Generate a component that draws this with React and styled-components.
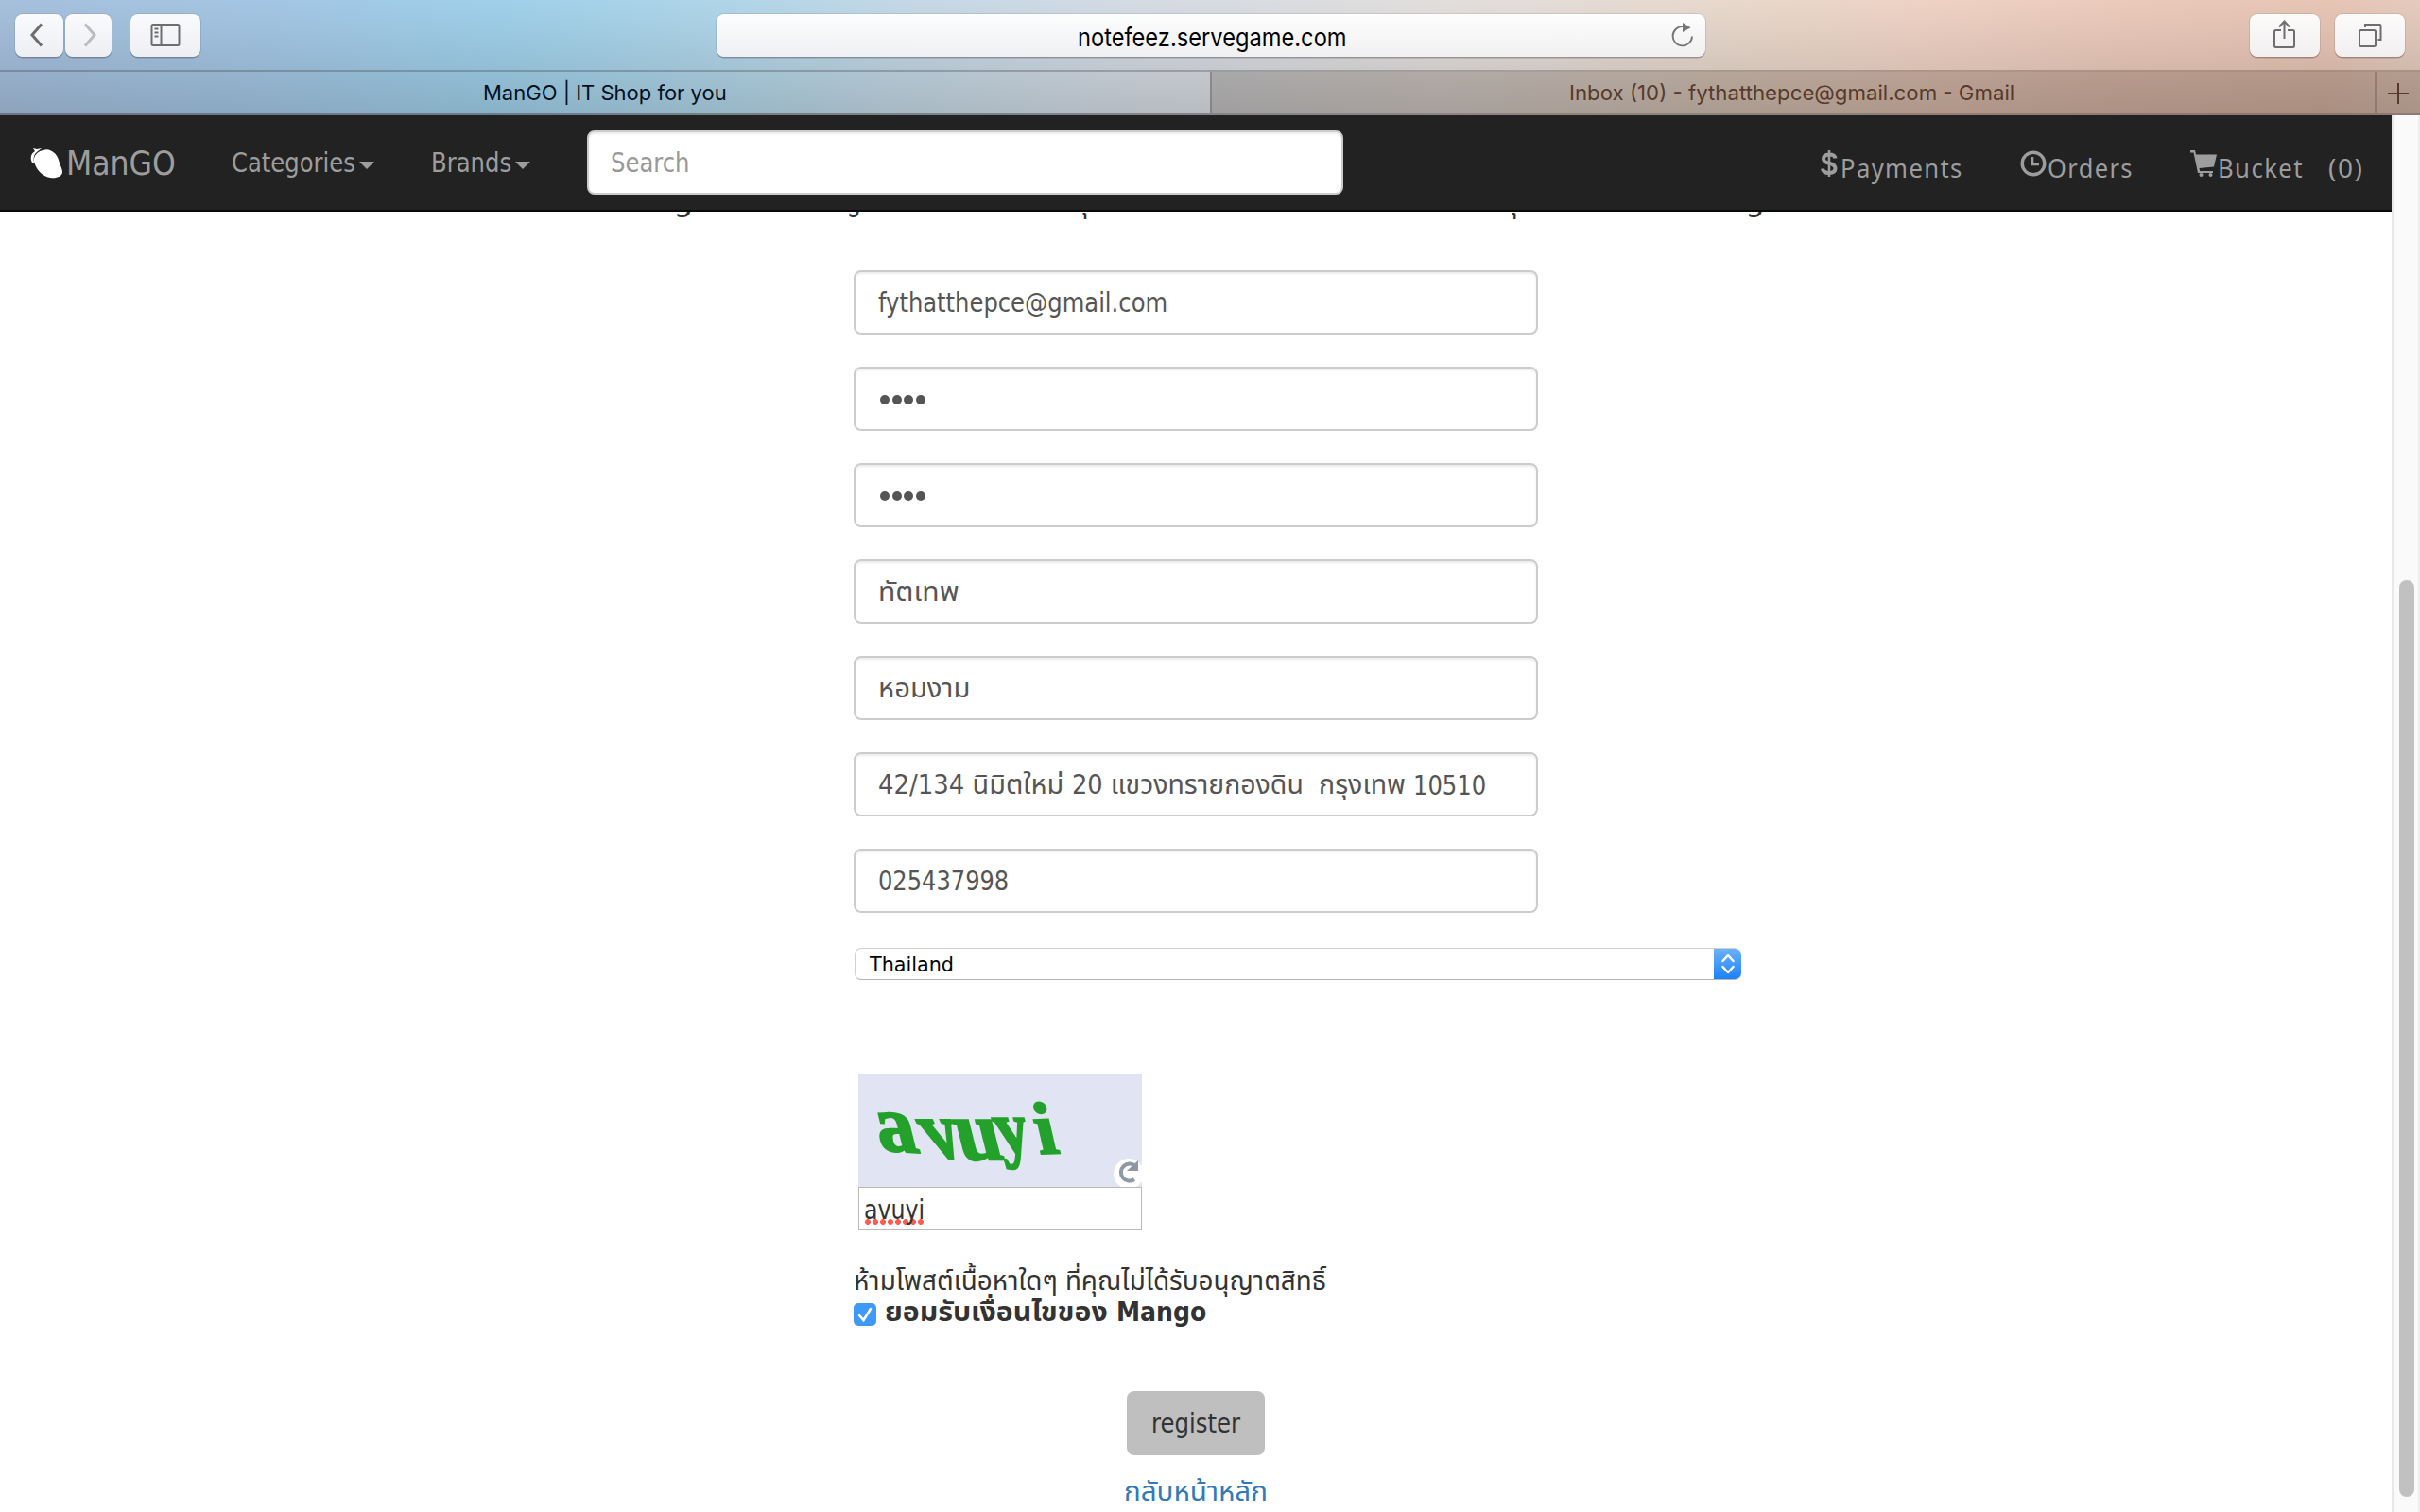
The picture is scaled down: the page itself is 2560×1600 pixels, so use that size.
import React, { useLayoutEffect, useRef, useState } from "react";
import styled, { createGlobalStyle } from "styled-components";

const GlobalStyle = createGlobalStyle`
  * { box-sizing: border-box; }
  html, body { margin: 0; padding: 0; background: #fff; overflow: hidden; }
  body { font-family: "DejaVu Sans Condensed", "DejaVu Sans", "Noto Sans Thai", "Loma", sans-serif; font-size: 28px; color: #333; }
`;

/* Sets one line of text to a fixed measure, whatever face the system supplies. */
const FitBox = styled.span`
  display: inline-block;
  flex: none;
  width: ${(p) => p.$width}px;
  white-space: pre;
  text-align: left;
`;
const FitInner = styled.span`
  display: inline-block;
  transform-origin: 0 50%;
`;
function Fit({ width, children }) {
  const ref = useRef(null);
  const [scale, setScale] = useState(1);
  useLayoutEffect(() => {
    const w = ref.current.offsetWidth;
    if (w) setScale(width / w);
  }, [width, children]);
  return (
    <FitBox $width={width}>
      <FitInner ref={ref} style={{ transform: `scaleX(${scale})` }}>{children}</FitInner>
    </FitBox>
  );
}

const Window = styled.div`
  width: 2560px;
  height: 1600px;
  display: flex;
  flex-direction: column;
  overflow: hidden;
  background: #fff;
`;

/* ---------- browser chrome ---------- */
const Chrome = styled.header`
  flex: none;
  height: 122px;
  display: flex;
  flex-direction: column;
  font-family: Inter, "Liberation Sans", sans-serif;
  background:
    linear-gradient(180deg, rgba(0,0,0,0) 0%, rgba(0,0,0,0.03) 25%, rgba(0,0,0,0.15) 100%),
    linear-gradient(97deg, #a6bfdc 0px, #a3c6e4 290px, #9fd0ea 530px, #b0d5e8 760px, #c4d8e5 960px, #d3dbe4 1180px, #e2dedc 1520px, #e8d8cc 1820px, #eed2c4 2020px, #eac9ba 2250px, #e6c5b5 2450px, #e4cfc2 2600px);
`;
const Toolbar = styled.div`
  height: 74px;
  display: grid;
  grid-template-columns: 742px 1046px 1fr;
  align-items: center;
  padding: 0 16px;
`;
const Tools = styled.div`
  display: flex;
  justify-content: ${(p) => (p.$end ? "flex-end" : "flex-start")};
  gap: ${(p) => p.$gap}px;
`;
const ToolButton = styled.button`
  width: ${(p) => p.$w}px;
  height: 45px;
  padding: 0;
  border: 0;
  border-radius: 8px;
  display: flex;
  align-items: center;
  justify-content: center;
  color: ${(p) => (p.$dim ? "#bcbcbe" : "#6e6e6e")};
  background: linear-gradient(rgba(255,255,255,0.93), rgba(243,243,245,0.93));
  box-shadow: 0 0 0 1px rgba(80,60,60,0.13), 0 1.5px 0 rgba(60,50,60,0.3);
`;
const Address = styled.div`
  height: 45px;
  border-radius: 8px;
  display: grid;
  grid-template-columns: 1fr auto 1fr;
  align-items: center;
  padding: 4px 12px 0 14px;
  font-size: 26px;
  color: #000;
  background: linear-gradient(rgba(255,255,255,0.95), rgba(243,243,245,0.93));
  box-shadow: 0 0 0 1px rgba(80,60,60,0.13), 0 1.5px 0 rgba(60,50,60,0.3);
`;
const Reload = styled.div`
  display: flex;
  justify-content: flex-end;
  color: #757575;
  margin-top: -4px;
`;
const TabBar = styled.div`
  height: 48px;
  display: flex;
  border-top: 2px solid rgba(40,30,30,0.25);
  border-bottom: 2px solid rgba(60,50,50,0.4);
`;
const Tab = styled.div`
  width: ${(p) => p.$w}px;
  height: 44px;
  display: flex;
  align-items: center;
  justify-content: center;
  padding: 0 0 1px;
  padding-right: ${(p) => (p.$active ? 0 : 4)}px;
  font-size: 22px;
  color: ${(p) => (p.$active ? "#03101f" : "#573a2b")};
  background: ${(p) => (p.$active ? "transparent" : "rgba(50,25,10,0.18)")};
  border-left: ${(p) => (p.$active ? "0" : "2px solid rgba(50,30,30,0.22)")};
`;
const NewTab = styled(Tab)`
  padding: 2px 0 0;
`;

/* ---------- page ---------- */
const Viewport = styled.div`
  flex: 1;
  display: flex;
  min-height: 0;
`;
const Page = styled.div`
  width: 2530px;
  display: flex;
  flex-direction: column;
`;
const Navbar = styled.nav`
  flex: none;
  height: 102px;
  display: flex;
  align-items: center;
  padding: 0 30px 0 32px;
  background: #222;
  border-bottom: 2px solid #080808;
  color: #9d9d9d;
`;
const Brand = styled.a`
  display: flex;
  align-items: center;
  gap: 4px;
  width: 213px;
  padding-top: 1px;
  font-size: 36px;
  line-height: 44px;
`;
const MenuLink = styled.a`
  display: flex;
  align-items: center;
  gap: 4px;
  width: ${(p) => p.$w}px;
  padding-top: 1px;
`;
const Caret = styled.span`
  border: 8px solid transparent;
  border-top-color: #9d9d9d;
  border-bottom: 0;
  margin-top: 4px;
`;
const inputLook = `
  height: 68px;
  border: 2px solid #ccc;
  border-radius: 8px;
  background: #fff;
  box-shadow: inset 0 2px 2px rgba(0,0,0,0.075);
  display: flex;
  align-items: center;
  padding: 0 24px;
`;
const Search = styled.div`
  ${inputLook}
  width: 800px;
  padding-left: 23px;
  color: #999;
`;
const NavRight = styled.div`
  margin-left: auto;
  display: flex;
  font-family: "Noto Sans", sans-serif;
  letter-spacing: 1.5px;
`;
const NavItem = styled.a`
  display: flex;
  align-items: center;
  gap: ${(p) => p.$gap}px;
  margin-left: ${(p) => p.$ml}px;
  line-height: 40px;
  & > span { margin-top: 9px; }
  & > svg { margin-top: 2px; }
`;
const Main = styled.main`
  flex: 1;
  min-height: 0;
  overflow: hidden;
  padding-left: 903px;
`;
const Headline = styled.h2`
  display: flex;
  margin: -33px 0 0 -260px;
  height: 40px;
  line-height: 40px;
  font-size: 36px;
  font-weight: 400;
  color: #333;
  white-space: nowrap;
`;
const Form = styled.form`
  padding-top: 55px;
  width: 939px;
  display: flex;
  flex-direction: column;
`;
const Field = styled.div`
  ${inputLook}
  width: 724px;
  margin-bottom: 34px;
  padding-top: ${(p) => (p.$drop ? 2 : 0)}px;
  color: #555;
`;
const Dots = styled.div`
  display: flex;
  gap: 2.6px;
  padding: 2px 0 0 2px;
`;
const Dot = styled.i`
  width: 10px;
  height: 10px;
  border-radius: 50%;
  background: #555;
`;
const Select = styled.div`
  margin: 3px 0 0 1px;
  width: 938px;
  height: 34px;
  border-radius: 7px;
  display: flex;
  align-items: center;
  justify-content: space-between;
  padding-left: 15px;
  overflow: hidden;
  font-size: 22px;
  color: #000;
  border: 1.5px solid #d0d0d0;
  border-bottom-color: #b4b4b4;
  border-right: 0;
`;
const Stepper = styled.div`
  width: 29px;
  height: 34px;
  display: flex;
  align-items: center;
  justify-content: center;
  background: linear-gradient(#6db3fa, #1a80fc);
`;
const Captcha = styled.div`
  margin: 99px 0 0 5px;
  width: 300px;
`;
const CaptchaArt = styled.svg`
  display: block;
  background: #e0e4f3;
  font-family: "Liberation Serif", serif;
  font-weight: 700;
`;
const CaptchaInput = styled.div`
  height: 46px;
  border: 1px solid #b9b9b9;
  padding: 0 5px;
  display: flex;
  align-items: center;
`;
const Misspelt = styled.span`
  height: 40px;
  line-height: 40px;
  margin-top: 4px;
  background: radial-gradient(circle at 4px 3px, #ff5b4e 2.6px, transparent 3.2px) 0 29px / 8px 6px repeat-x;
`;
const Notice = styled.p`
  margin: 34px 0 0;
  height: 40px;
  line-height: 40px;
`;
const Agree = styled.label`
  height: 34px;
  margin-top: -4px;
  display: flex;
  align-items: center;
  gap: 9px;
  font-weight: 700;
  line-height: 34px;
`;
const Check = styled.span`
  width: 24px;
  height: 24px;
  border-radius: 5px;
  background: #3f99f9;
  display: flex;
  margin-top: 3px;
`;
const Actions = styled.div`
  width: 724px;
  margin-top: 66px;
  display: flex;
  flex-direction: column;
  align-items: center;
`;
const Register = styled.button`
  width: 146px;
  height: 68px;
  padding: 0;
  border: 0;
  border-radius: 8px;
  background: #bfbfbf;
  color: #333;
  font: inherit;
`;
const Back = styled.a`
  margin-top: 19px;
  height: 40px;
  line-height: 40px;
  color: #337ab7;
`;
const Track = styled.div`
  width: 30px;
  padding: 492px 4px 0 6px;
  background: #fafafa;
  border-left: 2px solid #e8e8e8;
  border-right: 2px solid #ededed;
`;
const Thumb = styled.div`
  width: 16px;
  height: 970px;
  border-radius: 8px;
  background: #c1c1c1;
`;

const Icon = ({ w, h, children, sw = 2 }) => (
  <svg width={w} height={h} viewBox={`0 0 ${w} ${h}`} fill="none" stroke="currentColor" strokeWidth={sw}>{children}</svg>
);

const captchaLetters = [
  ["a", "translate(24 81) rotate(4) skewX(18) scale(1.14 1.14)"],
  ["v", "translate(79 90) skewX(24) scale(1 1.2)"],
  ["u", "translate(109 91) skewX(14) scale(1.15 1.22)"],
  ["y", "translate(151 84) skewX(16) scale(.95 1.08)"],
  ["i", "translate(192 85) rotate(-2) skewX(11) scale(1.08 1.06)"],
];

const fields = [
  { parts: [["fythatthepce@gmail.com", 306]] },
  { dots: true },
  { dots: true },
  { parts: [["ทัตเทพ", 86]], drop: true },
  { parts: [["หอมงาม", 97]], drop: true },
  { parts: [["42/134 นิมิตใหม่ ", 205], ["20 แขวงทรายกองดิน  กรุงเทพ ", 361], ["10510", 77]], drop: true },
  { parts: [["025437998", 138]] },
];

export default function App() {
  return (
    <Window>
      <GlobalStyle />
      <Chrome>
        <Toolbar>
          <Tools $gap={20}>
            <Tools $gap={2}>
              <ToolButton $w={51}><Icon w={24} h={26} sw={3}><path d="M14 1.500 4 13l10 11.500" /></Icon></ToolButton>
              <ToolButton $w={49} $dim><Icon w={22} h={26} sw={3}><path d="M7 1.500 17 13 7 24.500" /></Icon></ToolButton>
            </Tools>
            <ToolButton $w={74}>
              <Icon w={32} h={26}>
                <rect x="1.500" y="2" width="29" height="22" rx="1.500" />
                <path d="M11.500 2v22M4.500 6.500h4M4.500 10.500h4M4.500 14.500h4" />
              </Icon>
            </ToolButton>
          </Tools>
          <Address>
            <span />
            <Fit width={285}>notefeez.servegame.com</Fit>
            <Reload>
              <Icon w={24} h={28} sw={1.9}>
                <path d="M22 15.500a10.200 10.200 0 1 1-9.800-10.500" />
                <path d="M12 1v10l8.500-4.800z" fill="currentColor" stroke="none" />
              </Icon>
            </Reload>
          </Address>
          <Tools $end $gap={16}>
            <ToolButton $w={74}>
              <Icon w={26} h={34}>
                <path d="M9 12H3.500Q2 12 2 13.500v15Q2 30 3.500 30h18q1.500 0 1.500-1.500v-15Q23 12 21.500 12H16M12.500 21V3M7 8.500 12.500 2.500 18 8.500" />
              </Icon>
            </ToolButton>
            <ToolButton $w={74}>
              <Icon w={26} h={28}>
                <rect x="2" y="9" width="17" height="17" rx="1.500" />
                <path d="M8 6V3h15.500q1 0 1 1v15h-3" />
              </Icon>
            </ToolButton>
          </Tools>
        </Toolbar>
        <TabBar>
          <Tab $w={1280} $active><Fit width={258}>ManGO | IT Shop for you</Fit></Tab>
          <Tab $w={1232}><Fit width={471}>Inbox (10) - fythatthepce@gmail.com - Gmail</Fit></Tab>
          <NewTab $w={48}><Icon w={24} h={24}><path d="M12 1v22M1 12h22" /></Icon></NewTab>
        </TabBar>
      </Chrome>
      <Viewport>
        <Page>
          <Navbar>
            <Brand>
              <svg width="34" height="32" viewBox="0 0 34 32" fill="#fff">
                <path d="M14 2C20-1 28 5 30 12c1 5 4 9 4 13 0 5-7 7-13 6C13 30 6 22 4 14 3 9 7 3 14 2z" />
                <path d="M3 0l4 1 5-1-4 3C4 6 3 9 4 15L2 15C0 11 0 6 5 3z" />
              </svg>
              <Fit width={116}>ManGO</Fit>
            </Brand>
            <MenuLink $w={211}><Fit width={131}>Categories</Fit><Caret /></MenuLink>
            <MenuLink $w={165}><Fit width={85}>Brands</Fit><Caret /></MenuLink>
            <Search><Fit width={84}>Search</Fit></Search>
            <NavRight>
              <NavItem $gap={3} $ml={0}>
                <Icon w={18} h={30} sw={4}>
                  <path d="M15.500 9.500Q15 5.500 9 5.500T3 10q0 3.500 6 4.800T15.500 20q0 5-6.500 5T2 20.500" />
                  <path d="M9 1v28" strokeWidth="2.500" />
                </Icon>
                <Fit width={130}>Payments</Fit>
              </NavItem>
              <NavItem $gap={1} $ml={60}>
                <Icon w={28} h={28} sw={3.4}>
                  <circle cx="14" cy="14" r="11.800" />
                  <path d="M13 7v8h7" strokeWidth="2.600" />
                </Icon>
                <Fit width={91}>Orders</Fit>
              </NavItem>
              <NavItem $gap={1} $ml={60}>
                <svg width="28" height="30" viewBox="0 0 28 30" fill="currentColor">
                  <path d="M0 1h5l1 4.500h22L25 18.500 9.500 20l.7 3H24v2H8L3.500 3.500H0z" />
                  <circle cx="11.500" cy="27" r="2" /><circle cx="21.500" cy="27" r="2" />
                </svg>
                <Fit width={91}>Bucket</Fit>
              </NavItem>
              <NavItem $gap={0} $ml={26}><Fit width={37}>(0)</Fit></NavItem>
            </NavRight>
          </Navbar>
          <Main>
            <Headline>
              <Fit width={121}>{"Mango "}</Fit>
              <Fit width={147}>ให้ความสำคัญ</Fit>
              <Fit width={267}>{" และความสะดวกแก่คุณ"}</Fit>
              <Fit width={428}>{" ในการสมัครเข้าเป็นสมาชิกของเรา สนุ"}</Fit>
              <Fit width={172}>{"กกับการซื้อของ "}</Fit>
              <Fit width={109}>Mango</Fit>
            </Headline>
            <Form>
              {fields.map((f, i) => (
                <Field key={i} $drop={f.drop}>
                  {f.dots
                    ? <Dots><Dot /><Dot /><Dot /><Dot /></Dots>
                    : f.parts.map(([text, w]) => <Fit key={text} width={w}>{text}</Fit>)}
                </Field>
              ))}
              <Select>
                <Fit width={89}>Thailand</Fit>
                <Stepper>
                  <svg width="16" height="22" viewBox="0 0 16 22" fill="none" stroke="#fff" strokeWidth="2.500" strokeLinecap="round" strokeLinejoin="round">
                    <path d="M2.500 8 8 2l5.500 6M2.500 14 8 20l5.500-6" />
                  </svg>
                </Stepper>
              </Select>
              <Captcha>
                <CaptchaArt width="300" height="120">
                  {captchaLetters.map(([ch, t]) => (
                    <text key={ch} transform={t} fontSize="74" fill="#23a12b" stroke="#23a12b" strokeWidth="2">{ch}</text>
                  ))}
                  <circle cx="286" cy="106" r="16" fill="#fff" />
                  <path d="M292 112a9 9 0 1 1 1-14" fill="none" stroke="#8f99a6" strokeWidth="4" />
                  <path d="M296 92v11h-12z" fill="#8f99a6" />
                </CaptchaArt>
                <CaptchaInput><Misspelt><Fit width={64}>avuyi</Fit></Misspelt></CaptchaInput>
              </Captcha>
              <Notice><Fit width={500}>ห้ามโพสต์เนื้อหาใดๆ ที่คุณไม่ได้รับอนุญาตสิทธิ์</Fit></Notice>
              <Agree>
                <Check>
                  <svg width="24" height="24" viewBox="0 0 24 24" fill="none" stroke="#fff" strokeWidth="2.600" strokeLinecap="round">
                    <path d="M6 13l4.500 5L18 6" />
                  </svg>
                </Check>
                <span>
                  <Fit width={245}>{"ยอมรับเงื่อนไขของ "}</Fit>
                  <Fit width={95}>Mango</Fit>
                </span>
              </Agree>
              <Actions>
                <Register type="button"><Fit width={94}>register</Fit></Register>
                <Back><Fit width={152}>กลับหน้าหลัก</Fit></Back>
              </Actions>
            </Form>
          </Main>
        </Page>
        <Track><Thumb /></Track>
      </Viewport>
    </Window>
  );
}
